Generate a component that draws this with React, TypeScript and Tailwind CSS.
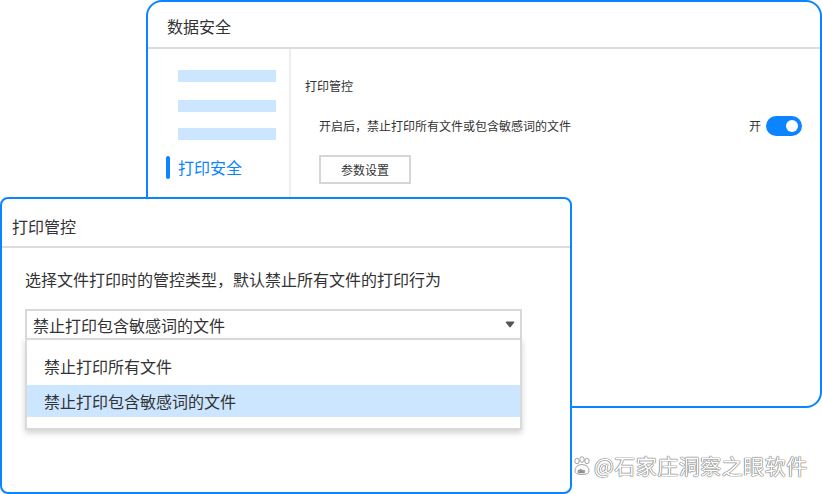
import React from 'react';

const font = "font-['Noto_Sans_CJK_SC','Noto_Sans',sans-serif]";

const BackPanel: React.FC = () => (
  <div className="absolute left-[146px] top-0 w-[676px] h-[408px] rounded-[16px] border-2 border-[#0a84ff] bg-white flex flex-col overflow-hidden">
    {/* header */}
    <div className="h-[47px] shrink-0 flex items-center pl-[19px] pt-[3px] text-[16px] text-[#333] border-b-2 border-[#dcdcdc]">
      数据安全
    </div>
    <div className="flex flex-1">
      {/* sidebar */}
      <div className="w-[143px] shrink-0 border-r-2 border-[#eeeeee] flex flex-col pt-[21px]">
        <div className="ml-[30px] w-[98px] h-[12px] bg-[#cce6ff]" />
        <div className="ml-[30px] mt-[18px] w-[98px] h-[12px] bg-[#cce6ff]" />
        <div className="ml-[30px] mt-[16px] w-[98px] h-[12px] bg-[#cce6ff]" />
        <div className="mt-[16px] ml-[18px] flex items-center h-[23px]">
          <div className="w-[4px] h-[23px] rounded-full bg-[#0a84ff]" />
          <span className="ml-[8px] text-[16px] text-[#0a84ff] leading-[20px] -translate-y-[1px]">打印安全</span>
        </div>
      </div>
      {/* content */}
      <div className="flex-1 flex flex-col pl-[14px] pr-[18px] pt-[29px]">
        <div className="text-[12px] text-[#333] leading-[16px]">打印管控</div>
        <div className="mt-[22px] pl-[14px] flex items-center justify-between h-[20px]">
          <span className="text-[12px] text-[#333]">开启后，禁止打印所有文件或包含敏感词的文件</span>
          <div className="flex items-center gap-[5px]">
            <span className="text-[12px] text-[#333]">开</span>
            <div className="w-[36px] h-[20px] rounded-full bg-[#0a84ff] flex items-center justify-end pr-[4px]">
              <div className="w-[12px] h-[12px] rounded-full bg-white" />
            </div>
          </div>
        </div>
        <div className="mt-[19px] ml-[14px]">
          <button className="w-[92px] h-[29px] border-2 border-[#d6d6d6] text-[12px] text-[#333] bg-white">
            参数设置
          </button>
        </div>
      </div>
    </div>
  </div>
);

const FrontPanel: React.FC = () => (
  <div className="absolute left-0 top-[197px] w-[572px] h-[297px] rounded-[8px] border-2 border-[#0a84ff] bg-white flex flex-col">
    <div className="h-[49px] shrink-0 flex items-center pl-[10px] pt-[6px] text-[16px] text-[#333] border-b-2 border-[#dcdcdc]">
      打印管控
    </div>
    <div className="pl-[23px] pt-[19px] flex flex-col">
      <div className="text-[16px] text-[#333] leading-[24px]">选择文件打印时的管控类型，默认禁止所有文件的打印行为</div>
      <div className="relative mt-[18px] w-[497px]">
        <div className="h-[31px] border-2 border-[#d9d9d9] flex items-center justify-between pl-[6px] pr-[5px]">
          <span className="text-[16px] text-[#333]">禁止打印包含敏感词的文件</span>
          <svg width="10" height="7" viewBox="0 0 10 7">
            <path d="M0.8 1.6 Q0.3 0.5 1.8 0.5 H8.2 Q9.7 0.5 9.2 1.6 L5.7 6.1 Q5 6.9 4.3 6.1 Z" fill="#555" />
          </svg>
        </div>
        <div className="absolute left-0 top-[29px] w-[497px] border-2 border-[#d9d9d9] bg-white shadow-[0_3px_6px_rgba(0,0,0,0.18)] flex flex-col pt-[11px] pb-[11px]">
          <div className="h-[34px] flex items-center pl-[17px] text-[16px] text-[#333] -translate-y-[2px]">禁止打印所有文件</div>
          <div className="h-[32px] flex items-center pl-[17px] text-[16px] text-[#333] bg-[#cce6ff]">禁止打印包含敏感词的文件</div>
        </div>
      </div>
    </div>
  </div>
);

const Watermark: React.FC = () => (
  <div className="absolute left-[572px] top-[450px] flex items-center gap-[2px] text-[21px] text-white [text-shadow:0_0_1px_#666,0_0_1px_#666,0_0_1px_#666]">
    <svg width="20" height="20" viewBox="0 0 20 20">
      <g fill="white" stroke="#999" strokeWidth="0.9">
        <ellipse cx="5" cy="5" rx="2.2" ry="2.8" />
        <ellipse cx="10" cy="3.5" rx="2.2" ry="2.8" />
        <ellipse cx="15" cy="5" rx="2.2" ry="2.8" />
        <path d="M3 15 Q3 9 10 8.5 Q17 9 17 15 Q17 18.5 10 18.5 Q3 18.5 3 15 Z" />
      </g>
      <text x="6" y="17" fontSize="6" fill="#999" stroke="none" fontFamily="Liberation Sans">du</text>
    </svg>
    <span className="tracking-[0.5px]">@石家庄洞察之眼软件</span>
  </div>
);

export default function App() {
  return (
    <div className={`relative w-[822px] h-[494px] bg-white overflow-hidden ${font}`}>
      <BackPanel />
      <FrontPanel />
      <Watermark />
    </div>
  );
}
